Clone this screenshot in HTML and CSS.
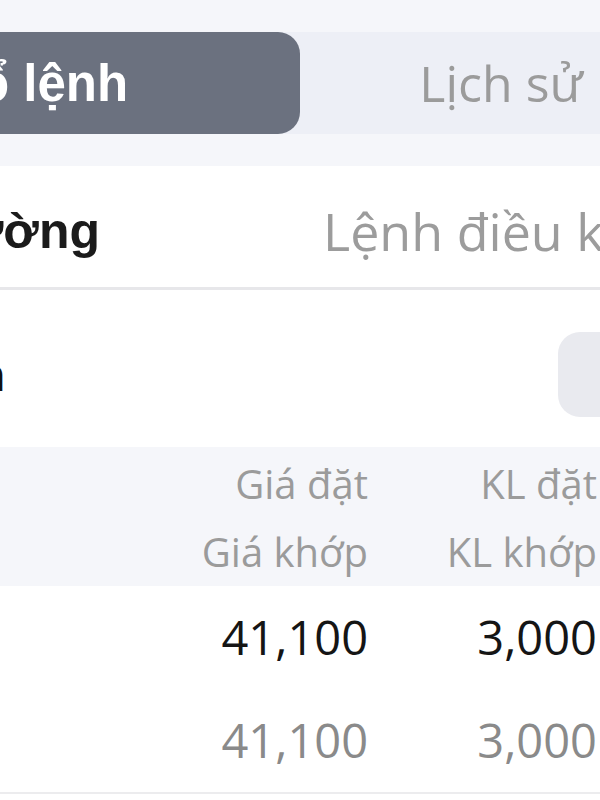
FILE: index.html
```html
<!DOCTYPE html>
<html lang="vi">
<head>
<meta charset="utf-8">
<title>Sổ lệnh</title>
<link rel="stylesheet" href="styles.css">
</head>
<body>
<div class="screen">
  <div class="top">
    <div class="seg">
      <div class="seg-tab active">Sổ lệnh</div>
      <div class="seg-tab">Lịch sử</div>
    </div>
  </div>
  <div class="subtabs">
    <div class="sub active">Lệnh thường</div>
    <div class="sub">Lệnh điều kiện</div>
  </div>
  <div class="filter">
    <div class="filter-label">Tất cả lệnh</div>
    <div class="pill"></div>
  </div>
  <div class="thead">
    <div class="tline">
      <span class="c1">Giá đặt</span>
      <span class="c2">KL đặt</span>
    </div>
    <div class="tline">
      <span class="c1">Giá khớp</span>
      <span class="c2">KL khớp</span>
    </div>
  </div>
  <div class="entry">
    <div class="rline main">
      <span class="c1">41,100</span>
      <span class="c2">3,000</span>
    </div>
    <div class="rline sub-val">
      <span class="c1">41,100</span>
      <span class="c2">3,000</span>
    </div>
  </div>
</div>
</body>
</html>
```
FILE: styles.css
```css
html, body {
  margin: 0;
  padding: 0;
  background: #ffffff;
}
body {
  width: 600px;
  height: 800px;
  overflow: hidden;
  font-family: "Open Sans", "Noto Sans", sans-serif;
}
.screen {
  width: 600px;
  overflow: hidden;
}
.top {
  background: #f5f6fa;
  padding: 32px 0 32px;
  border-top: 3px solid #fbfbfd;
  margin-top: -3px;
}
.seg {
  display: flex;
  width: 928px;
  height: 102px;
  margin-left: -228px;
  background: #edeff6;
}
.seg-tab {
  display: flex;
  flex-shrink: 0;
  align-items: center;
  justify-content: center;
  width: 402px;
  color: #9b9b9b;
  font-family: "Open Sans", sans-serif;
  font-size: 50px;
  white-space: nowrap;
}
.seg-tab.active {
  width: 528px;
  background: #6b717f;
  border-radius: 0 22px 22px 0;
  color: #ffffff;
  font-family: "Liberation Sans", Arial, sans-serif;
  font-weight: bold;
  font-size: 51px;
}
.subtabs {
  display: flex;
  align-items: center;
  height: 113px;
  padding-top: 8px;
  border-bottom: 3px solid #e7e7ea;
  white-space: nowrap;
}
.sub {
  flex-shrink: 0;
  color: #9c9c9c;
  font-family: "Open Sans", sans-serif;
  font-size: 52px;
  margin-left: 223px;
}
.sub.active {
  width: 400px;
  margin-left: -300px;
  text-align: right;
  color: #1b1b1b;
  font-family: "Liberation Sans", Arial, sans-serif;
  font-weight: bold;
  font-size: 50px;
}
.filter {
  display: flex;
  align-items: center;
  height: 145px;
  padding-top: 12px;
  white-space: nowrap;
}
.filter-label {
  flex-shrink: 0;
  width: 300px;
  margin-left: -295px;
  text-align: right;
  color: #111;
  font-family: "Liberation Sans", Arial, sans-serif;
  font-weight: bold;
  font-size: 46px;
}
.pill {
  flex-shrink: 0;
  width: 120px;
  height: 85px;
  margin-left: 553px;
  border-radius: 22px;
  background: #e9eaef;
}
.thead {
  background: #f5f6fa;
  height: 136px;
  padding-top: 3px;
  color: #9b9b9b;
  font-size: 40px;
}
.tline, .rline {
  display: flex;
  white-space: nowrap;
}
.tline {
  line-height: 68px;
}
.c1 {
  flex-shrink: 0;
  width: 368px;
  text-align: right;
}
.c2 {
  flex-shrink: 0;
  width: 229px;
  text-align: right;
}
.entry {
  border-bottom: 2px solid #ececee;
  font-size: 47px;
}
.rline {
  line-height: 103px;
}
.rline.main {
  color: #151515;
}
.rline.sub-val {
  color: #8a8a8a;
}
```
